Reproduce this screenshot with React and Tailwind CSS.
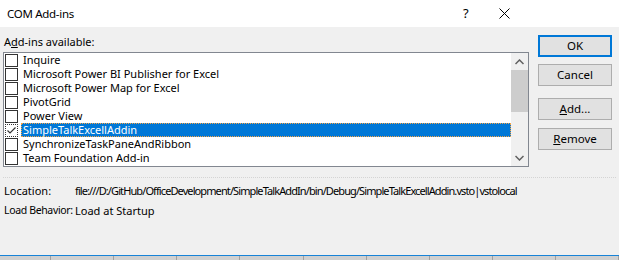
import React from 'react'

const items = [
  { name: 'Inquire' },
  { name: 'Microsoft Power BI Publisher for Excel' },
  { name: 'Microsoft Power Map for Excel' },
  { name: 'PivotGrid' },
  { name: 'Power View' },
  { name: 'SimpleTalkExcellAddin', checked: true, selected: true },
  { name: 'SynchronizeTaskPaneAndRibbon' },
  { name: 'Team Foundation Add-in' },
]

function Checkbox({ checked, focused }) {
  return (
    <div className={`w-[13px] h-[13px] shrink-0 bg-white flex items-center justify-center ${focused ? 'border border-dotted border-[#333]' : 'border border-[#333]'}`}>
      {checked && (
        <svg width="11" height="11" viewBox="0 0 11 11">
          <path d="M1.5 5.5 L4 8 L9.5 2.5" fill="none" stroke="#333" strokeWidth="1.2" />
        </svg>
      )}
    </div>
  )
}

function Btn({ children, primary, className = '' }) {
  return (
    <div className={`w-[74px] h-[22px] bg-[#e1e1e1] flex items-center justify-center text-[11.5px] text-black ${primary ? 'border-2 border-[#0078d7]' : 'border border-[#adadad]'} ${className}`}>
      {children}
    </div>
  )
}

export default function App() {
  return (
    <div className="w-[619px] h-[260px] bg-[#f0f0f0] overflow-hidden flex flex-col text-black text-[11px]" style={{ fontFamily: '"Noto Sans", sans-serif' }}>
      {/* Title bar */}
      <div className="h-[27px] bg-white flex items-center shrink-0">
        <span className="pl-[7px] text-[11.5px] tracking-[-0.3px] flex-1">COM Add-ins</span>
        <span className="text-[13px] w-[20px] mr-[16px]">?</span>
        <svg width="11" height="11" viewBox="0 0 11 11" className="mr-[109px]">
          <path d="M0.5 0.5 L10.5 10.5 M10.5 0.5 L0.5 10.5" stroke="#000" strokeWidth="1" />
        </svg>
      </div>

      <div className="flex pl-[3px] h-[140px] shrink-0">
        {/* left */}
        <div className="w-[526px] flex flex-col">
          <div className="h-[25px] pt-[7px] pl-[1px] leading-[15px]">
            A<span className="underline">d</span>d-ins available:
          </div>
          <div className="h-[115px] border border-[#828790] bg-white flex">
            <div className="flex-1 flex flex-col">
              {items.map((it) => (
                <div key={it.name} className="h-[14px] flex items-center pl-[1px]">
                  <Checkbox checked={it.checked} focused={it.selected} />
                  <div className={`ml-[3px] h-[14px] flex items-center pl-[2px] leading-[14px] ${it.selected ? 'flex-1 bg-[#0078d7] text-white outline outline-1 outline-dotted outline-[#f7a547] -outline-offset-1' : ''}`}>
                    {it.name}
                  </div>
                </div>
              ))}
            </div>
            <div className="w-[17px] bg-[#f0f0f0] flex flex-col">
              <div className="h-[17px] flex items-center justify-center">
                <svg width="9" height="6" viewBox="0 0 9 6">
                  <path d="M0.5 5 L4.5 1 L8.5 5" fill="none" stroke="#606060" strokeWidth="1.5" />
                </svg>
              </div>
              <div className="h-[42px] bg-[#cdcdcd]" />
              <div className="flex-1" />
              <div className="h-[17px] flex items-center justify-center">
                <svg width="9" height="6" viewBox="0 0 9 6">
                  <path d="M0.5 1 L4.5 5 L8.5 1" fill="none" stroke="#606060" strokeWidth="1.5" />
                </svg>
              </div>
            </div>
          </div>
        </div>
        {/* buttons */}
        <div className="ml-[9px] pt-[8px] flex flex-col">
          <Btn primary>OK</Btn>
          <Btn className="mt-[7px]">Cancel</Btn>
          <Btn className="mt-[12px]"><span className="underline">A</span>dd...</Btn>
          <Btn className="mt-[8px]"><span className="underline">R</span>emove</Btn>
        </div>
      </div>

      <div className="mt-[10px] mx-[3px] border-t border-dotted border-[#d4d4d4]" />

      <div className="pl-[4px] pt-[3px] flex flex-col">
        <div className="h-[20px] flex items-center whitespace-nowrap">
          <span className="w-[71px] shrink-0">Location:</span>
          <span className="tracking-[-0.9px]">file:///D:/GitHub/OfficeDevelopment/SimpleTalkAddIn/bin/Debug/SimpleTalkExcellAddin.vsto|vstolocal</span>
        </div>
        <div className="h-[20px] flex items-center whitespace-nowrap">
          <span className="w-[71px] shrink-0 text-[10.5px] tracking-[-0.35px]">Load Behavior:</span>
          <span>Load at Startup</span>
        </div>
      </div>

      <div className="flex-1" />
      <div className="h-[1px] bg-[#1883d7] shrink-0" />
      <div className="h-[4px] bg-[#d0d0d0] flex shrink-0">
        {[0, 1, 2, 3, 4, 5, 6, 7, 8, 9].map((i) => (
          <div key={i} className={`${i === 0 ? 'w-[52px]' : 'w-[64px]'} h-full border-r border-[#a0a0a0]`} />
        ))}
      </div>
    </div>
  )
}
